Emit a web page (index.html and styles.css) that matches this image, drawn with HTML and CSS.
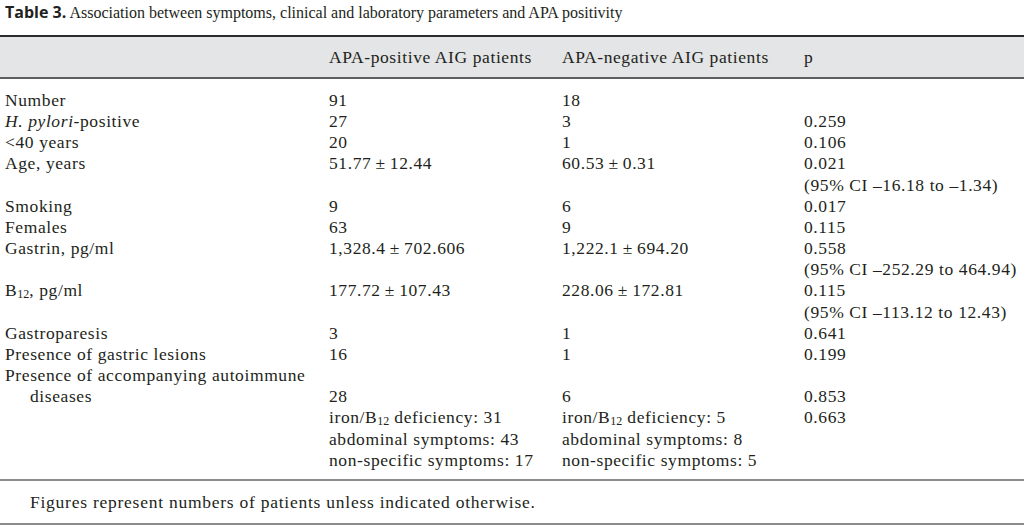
FILE: index.html
```html
<!DOCTYPE html>
<html lang="en">
<head>
    <meta charset="UTF-8">
    <meta name="viewport" content="width=device-width, initial-scale=1.0">
    <title>Table 3</title>
    <link rel="stylesheet" href="styles.css">
</head>
<body>
    <!-- Caption -->
    <p class="caption"><span class="label">Table 3.</span> Association between symptoms, clinical and laboratory parameters and APA positivity</p>

    <table class="data-table">
        <colgroup>
            <col class="col-param">
            <col class="col-pos">
            <col class="col-neg">
            <col class="col-p">
        </colgroup>
        <thead>
            <tr>
                <th></th>
                <th>APA-positive AIG patients</th>
                <th>APA-negative AIG patients</th>
                <th>p</th>
            </tr>
        </thead>
        <tbody>
            <tr class="first-row">
                <td>Number</td>
                <td>91</td>
                <td>18</td>
                <td></td>
            </tr>
            <tr>
                <td><i>H. pylori</i>-positive</td>
                <td>27</td>
                <td>3</td>
                <td>0.259</td>
            </tr>
            <tr>
                <td>&lt;40 years</td>
                <td>20</td>
                <td>1</td>
                <td>0.106</td>
            </tr>
            <tr>
                <td>Age, years</td>
                <td>51.77&thinsp;±&thinsp;12.44</td>
                <td>60.53&thinsp;±&thinsp;0.31</td>
                <td>0.021<br>(95% CI –16.18 to –1.34)</td>
            </tr>
            <tr>
                <td>Smoking</td>
                <td>9</td>
                <td>6</td>
                <td>0.017</td>
            </tr>
            <tr>
                <td>Females</td>
                <td>63</td>
                <td>9</td>
                <td>0.115</td>
            </tr>
            <tr>
                <td>Gastrin, pg/ml</td>
                <td>1,328.4&thinsp;±&thinsp;702.606</td>
                <td>1,222.1&thinsp;±&thinsp;694.20</td>
                <td>0.558<br>(95% CI –252.29 to 464.94)</td>
            </tr>
            <tr>
                <td>B<sub>12</sub>, pg/ml</td>
                <td>177.72&thinsp;±&thinsp;107.43</td>
                <td>228.06&thinsp;±&thinsp;172.81</td>
                <td>0.115<br>(95% CI –113.12 to 12.43)</td>
            </tr>
            <tr>
                <td>Gastroparesis</td>
                <td>3</td>
                <td>1</td>
                <td>0.641</td>
            </tr>
            <tr>
                <td>Presence of gastric lesions</td>
                <td>16</td>
                <td>1</td>
                <td>0.199</td>
            </tr>
            <tr class="wrap-row">
                <td class="hang">Presence of accompanying autoimmune diseases</td>
                <td>28</td>
                <td>6</td>
                <td>0.853</td>
            </tr>
            <tr>
                <td></td>
                <td>iron/B<sub>12</sub> deficiency: 31</td>
                <td>iron/B<sub>12</sub> deficiency: 5</td>
                <td>0.663</td>
            </tr>
            <tr>
                <td></td>
                <td>abdominal symptoms: 43</td>
                <td>abdominal symptoms: 8</td>
                <td></td>
            </tr>
            <tr class="last-row">
                <td></td>
                <td>non-specific symptoms: 17</td>
                <td>non-specific symptoms: 5</td>
                <td></td>
            </tr>
        </tbody>
        <tfoot>
            <tr>
                <td colspan="4">Figures represent numbers of patients unless indicated otherwise.</td>
            </tr>
        </tfoot>
    </table>
</body>
</html>
```

FILE: styles.css
```css
/* Basic Reset */
* {
    margin: 0;
    padding: 0;
    box-sizing: border-box;
}

body {
    font-family: "Liberation Serif", "Times New Roman", serif;
    font-size: 16px;
    color: #231f20;
    background-color: #fff;
    width: 1028px;
}

/* Caption */
.caption {
    font-size: 16px;
    line-height: 24px;
    padding-left: 2px;
}

.caption .label {
    font-family: "Open Sans", "Liberation Sans", sans-serif;
    font-weight: 700;
    font-size: 16px;
    margin-left: 3px;
}

/* Table */
.data-table {
    width: 1024px;
    table-layout: fixed;
    border-collapse: collapse;
    margin-top: 10px;
    font-size: 17.5px;
    letter-spacing: 0.6px;
}

.col-param { width: 329px; }
.col-pos { width: 233px; }
.col-neg { width: 242px; }

.data-table thead th {
    background-color: #e4e5e6;
    font-weight: 400;
    text-align: left;
    height: 42px;
    padding-top: 1px;
    border-top: 2px solid #2b2b2b;
    border-bottom: 2px solid #5e5e5e;
}

.data-table td {
    vertical-align: top;
    line-height: 21.15px;
    padding: 0;
    white-space: nowrap;
}

.data-table td:first-child {
    padding-left: 5px;
}

.data-table .first-row td {
    padding-top: 11px;
}

.data-table .last-row td {
    padding-bottom: 8px;
}

.data-table .wrap-row td {
    vertical-align: bottom;
}

.data-table .wrap-row .hang {
    white-space: normal;
    padding-left: 30px;
    text-indent: -25px;
}

sub {
    font-size: 12px;
    letter-spacing: 0;
    line-height: 0;
    vertical-align: -2px;
}

/* Footnote */
.data-table tfoot td {
    border-top: 2px solid #8c8c8c;
    border-bottom: 2px solid #8c8c8c;
    padding: 11px 0 11px 30px;
    line-height: 20px;
    letter-spacing: 0.75px;
}

.data-table tfoot td:first-child {
    padding-left: 30px;
}
```
